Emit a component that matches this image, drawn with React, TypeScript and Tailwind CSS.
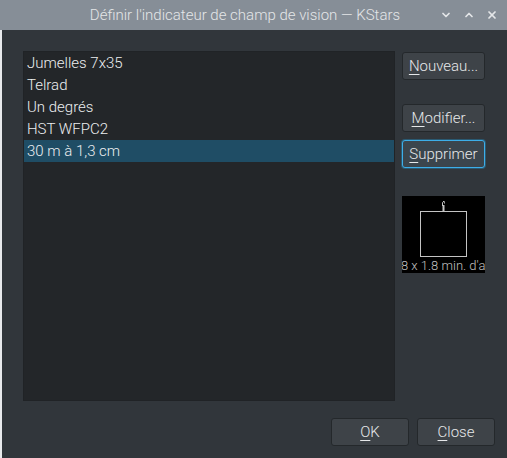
import { X, ChevronDown, ChevronUp } from 'lucide-react'

const items = ['Jumelles 7x35', 'Telrad', 'Un degrés', 'HST WFPC2', '30 m à 1,3 cm']

function Btn({
  letter,
  rest,
  focused,
  className = '',
}: {
  letter: string
  rest: string
  focused?: boolean
  className?: string
}) {
  return (
    <button
      className={
        'h-[28px] rounded-[3px] border text-[15px] font-light text-[#e6e8ea] flex items-center justify-center ' +
        (focused
          ? 'border-[#3daee9] bg-[#3b454d] ring-1 ring-[#2a5a73]'
          : 'border-[#24282b] bg-[#3e4348]') +
        ' ' +
        className
      }
    >
      <span>
        <span className="underline underline-offset-[3px] decoration-1">{letter}</span>
        {rest}
      </span>
    </button>
  )
}

export default function App() {
  return (
    <div
      className="w-[507px] h-[458px] flex flex-col bg-[#31363b] overflow-hidden"
      style={{ fontFamily: 'Roboto, "Liberation Sans", sans-serif' }}
    >
      <header className="h-[30px] bg-[#868e97] flex items-center text-[#e4e6e8] shrink-0">
        <div className="flex-1 text-center text-[15px] font-light pl-[62px]">
          Définir l'indicateur de champ de vision — KStars
        </div>
        <div className="flex items-center gap-[11px] pr-[9px] pl-[12px]">
          <ChevronDown className="size-[12px]" strokeWidth={3.5} />
          <ChevronUp className="size-[12px]" strokeWidth={3.5} />
          <X className="size-[12px]" strokeWidth={3.5} />
        </div>
      </header>

      <div className="flex-1 flex flex-col border-l-[2px] border-l-[#e8eaec] pl-[21px] pr-[12px] pt-[21px] pb-[12px]">
        <div className="flex-1 flex gap-[7px]">
          <ul className="w-[372px] h-[350px] bg-[#232629] border border-[#202326] text-[15px] font-light text-[#eceef0]">
            {items.map((it, i) => (
              <li
                key={it}
                className={
                  'h-[22px] leading-[22px] pl-[3px] ' + (i === 4 ? 'bg-[#1f4d65]' : '')
                }
              >
                {it}
              </li>
            ))}
          </ul>

          <div className="w-[83px] flex flex-col pt-[1px] pr-[10px] box-content">
            <Btn letter="N" rest="ouveau..." />
            <Btn letter="M" rest="odifier..." className="mt-[24px]" />
            <Btn letter="S" rest="upprimer" focused className="mt-[8px]" />
            <div className="mt-[28px] h-[77px] bg-black relative overflow-hidden flex justify-center">
              <svg width="83" height="65" className="absolute left-0 top-0">
                <rect x="18.5" y="15.5" width="46" height="45" fill="none" stroke="#c4c4c4" strokeWidth="1" />
                <line x1="41.5" y1="9" x2="41.5" y2="15" stroke="#c4c4c4" strokeWidth="2" />
                <path d="M40.5 10 L40.5 6.5 L42 5 L42.5 7.5" fill="none" stroke="#c4c4c4" strokeWidth="1" />
              </svg>
              <span className="absolute bottom-[0px] whitespace-nowrap text-[13px] leading-[15px] font-light text-[#c0c0c0]">
                1.8 x 1.8 min. d'arc
              </span>
            </div>
          </div>
        </div>

        <div className="flex justify-end gap-[8px] pr-[0px]">
          <Btn letter="O" rest="K" className="w-[78px]" />
          <Btn letter="C" rest="lose" className="w-[78px]" />
        </div>
      </div>
    </div>
  )
}
